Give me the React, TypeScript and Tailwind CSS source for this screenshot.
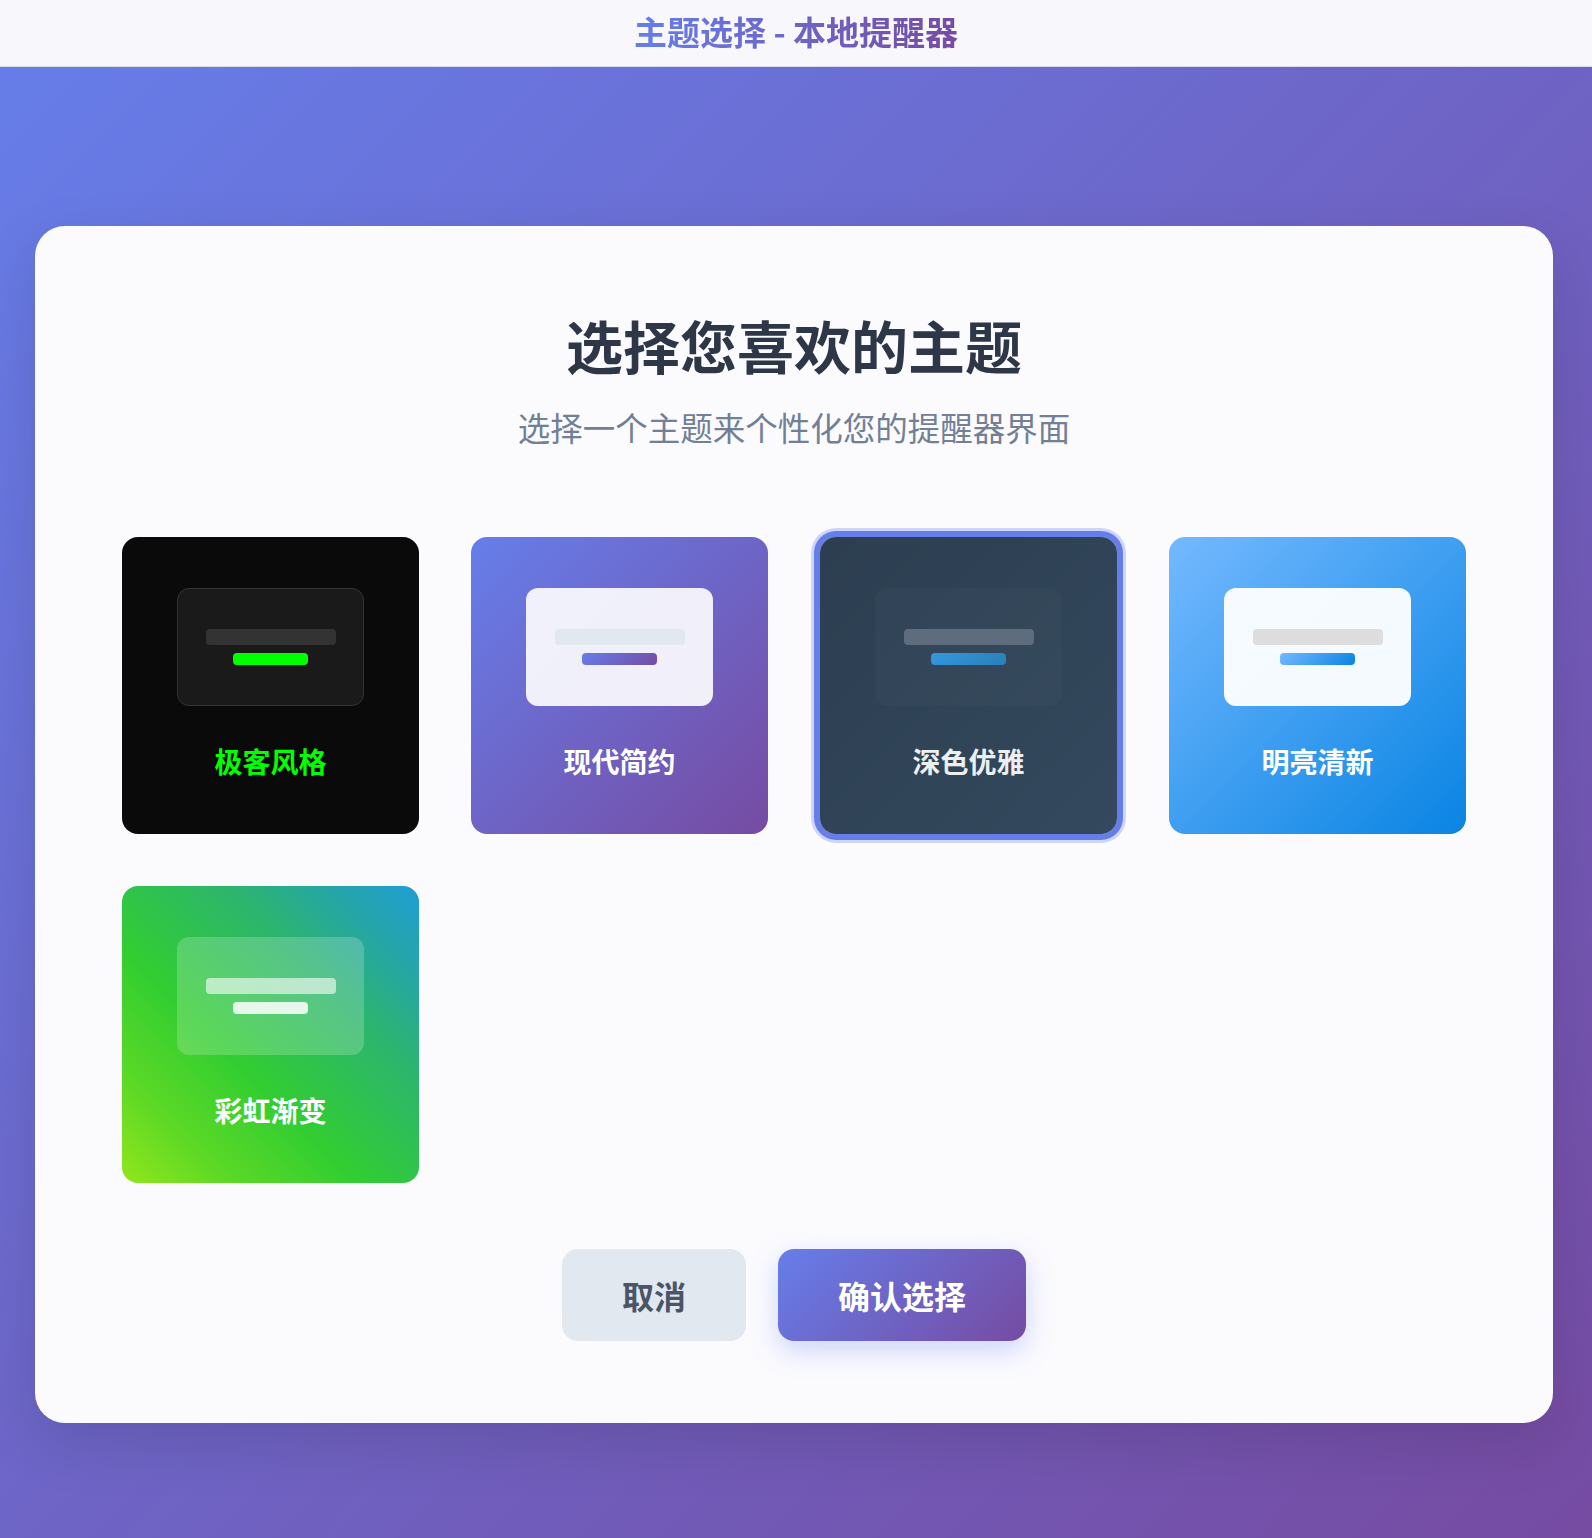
import React from "react";

type Theme = {
  name: string;
  card: string;
  preview: string;
  bar1: string;
  bar2: string;
  label: string;
  selected?: boolean;
};

const themes: Theme[] = [
  {
    name: "极客风格",
    card: "bg-[#0a0a0a]",
    preview: "bg-[#1a1a1a] border border-[#333333]",
    bar1: "bg-[#333333]",
    bar2: "bg-[#00ff00]",
    label: "text-[#00ff00]",
  },
  {
    name: "现代简约",
    card: "bg-[linear-gradient(135deg,#667eea_0%,#764ba2_100%)]",
    preview: "bg-[rgba(255,255,255,0.9)]",
    bar1: "bg-[#e2e8f0]",
    bar2: "bg-[linear-gradient(135deg,#667eea_0%,#764ba2_100%)]",
    label: "text-white",
  },
  {
    name: "深色优雅",
    card: "bg-[linear-gradient(135deg,#2c3e50_0%,#34495e_100%)] shadow-[0_0_0_6px_#667eea,0_0_0_9px_rgba(102,126,234,0.3)]",
    preview: "bg-[rgba(255,255,255,0.025)]",
    bar1: "bg-[#5d6d7e]",
    bar2: "bg-[linear-gradient(135deg,#3498db_0%,#2980b9_100%)]",
    label: "text-[#ecf0f1]",
    selected: true,
  },
  {
    name: "明亮清新",
    card: "bg-[linear-gradient(135deg,#74b9ff_0%,#0984e3_100%)]",
    preview: "bg-[rgba(255,255,255,0.95)]",
    bar1: "bg-[#dddddd]",
    bar2: "bg-[linear-gradient(135deg,#74b9ff_0%,#0984e3_100%)]",
    label: "text-white",
  },
  {
    name: "彩虹渐变",
    card: "bg-[linear-gradient(45deg,#92e61c_0%,#5cd925_18%,#32cd32_40%,#2cb56e_68%,#25a5a8_85%,#1f9ed6_100%)]",
    preview: "bg-[rgba(255,255,255,0.2)]",
    bar1: "bg-[rgba(255,255,255,0.6)]",
    bar2: "bg-[rgba(255,255,255,0.85)]",
    label: "text-white",
  },
];

function ThemeCard({ t }: { t: Theme }) {
  return (
    <div
      className={`w-[297px] h-[297px] rounded-2xl flex flex-col items-center justify-center ${t.card}`}
    >
      <div
        className={`w-[187px] h-[118px] rounded-xl flex flex-col items-center justify-center gap-[8px] ${t.preview}`}
      >
        <div className={`w-[130px] h-[16px] rounded-[4px] ${t.bar1}`} />
        <div className={`w-[75px] h-[12px] rounded-[4px] ${t.bar2}`} />
      </div>
      <div className={`mt-[34px] mb-[2px] text-[28px] leading-[42px] font-bold ${t.label}`}>
        {t.name}
      </div>
    </div>
  );
}

export default function App() {
  return (
    <div
      className="w-[1592px] min-h-[1538px] bg-[linear-gradient(135deg,#667eea_0%,#764ba2_100%)] flex flex-col"
      style={{ fontFamily: '"Noto Sans CJK SC", "Noto Sans", sans-serif' }}
    >
      <header className="h-[67px] bg-[#f8f8fc] border-b border-[#d9dbea] flex items-center justify-center pb-[4px]">
        <h1 className="text-[33px] leading-[40px] font-bold bg-[linear-gradient(90deg,#667eea_0%,#764ba2_100%)] bg-clip-text text-transparent">
          主题选择 - 本地提醒器
        </h1>
      </header>

      <main className="pt-[159px] pb-[115px] pl-[35px]">
        <div className="w-[1518px] h-[1197px] rounded-[30px] bg-[#fbfbfe] shadow-[0_20px_60px_rgba(0,0,0,0.12)] flex flex-col items-center pt-[85px]">
          <h2 className="text-[57px] leading-[67px] font-bold text-[#2d3748]">
            选择您喜欢的主题
          </h2>
          <p className="mt-[25px] text-[32.5px] leading-[48px] text-[#718096]">
            选择一个主题来个性化您的提醒器界面
          </p>

          <div className="mt-[86px] grid grid-cols-[repeat(4,297px)] gap-[52px]">
            {themes.map((t) => (
              <ThemeCard key={t.name} t={t} />
            ))}
          </div>

          <div className="mt-[66px] flex gap-[32px]">
            <button className="h-[92px] px-[60px] rounded-2xl bg-[#e2e8f0] text-[#4a5568] text-[32px] font-bold leading-[48px]">
              取消
            </button>
            <button className="h-[92px] px-[60px] rounded-2xl bg-[linear-gradient(135deg,#667eea_0%,#764ba2_100%)] text-white text-[32px] font-bold leading-[48px] shadow-[0_10px_28px_rgba(102,126,234,0.3)]">
              确认选择
            </button>
          </div>
        </div>
      </main>
    </div>
  );
}
